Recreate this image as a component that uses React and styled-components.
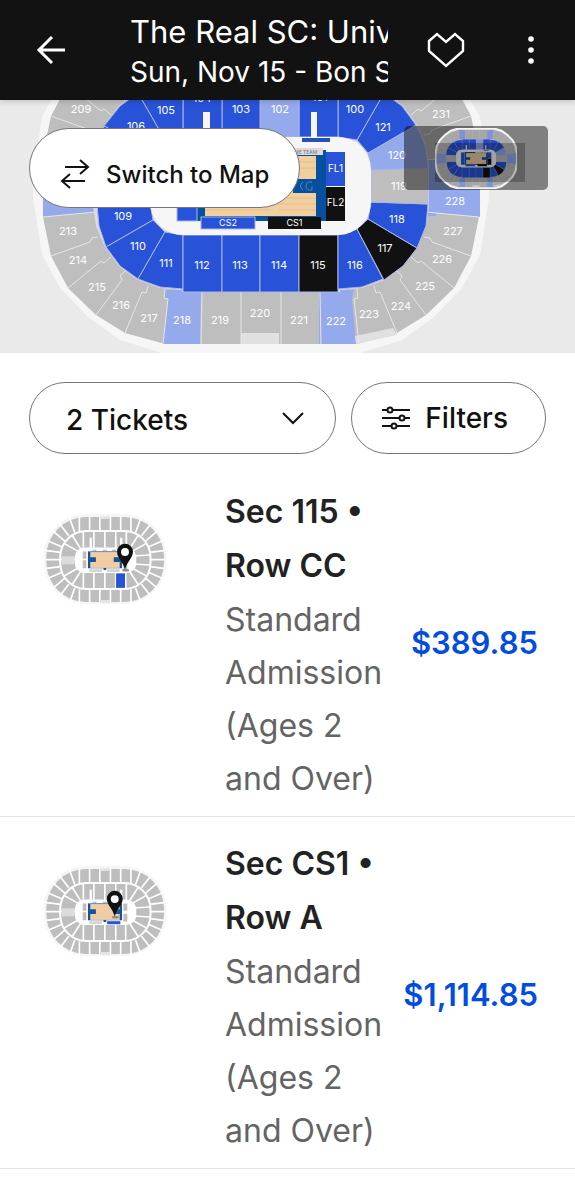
import styled, { createGlobalStyle } from 'styled-components'

const BLUE = '#2853d8'
const LIGHT = '#95a9ed'
const GRAY = '#bebebe'
const BLACK = '#111111'

const OUTLINE = [[33, 186], [33, 198], [42, 255], [60, 288], [88, 317], [120, 340], [162, 353]]
const STANDS = [[43, 186], [43, 217], [51, 256], [68, 288], [96, 315], [125, 333], [165, 344]]
const BOWL = [[94, 186], [94, 206], [97, 226], [106, 247], [120, 266], [138, 279], [160, 287], [183, 289], [183, 291]]

const SEAMS = [
	[[43, 217], [96, 212]],
	[[51, 256], [90, 242], [92, 238], [98, 237]],
	[[68, 288], [101, 261], [104, 263], [111, 257]],
	[[96, 315], [122, 280], [120, 276], [126, 270]],
	[[125, 333], [142, 292], [146, 293], [148, 286]],
	[[163, 344], [168, 299], [164, 298], [165, 289]],
	[[201, 344], [202, 292]],
	[[241, 344], [241, 292]],
]

const SECTIONS = [
	{ fill: BLUE, points: '150,202 153,220 106,247 99,226 97,204' },
	{ fill: BLUE, points: '153,220 165,232 138,279 120,266 106,247' },
	{ fill: BLUE, points: '165,232 183,235 183,289 160,287 138,279' },
	{ fill: BLUE, points: '183,235 222,235 222,292 183,292' },
	{ fill: BLUE, points: '222,235 260,235 260,292 222,292' },
	{ fill: BLUE, points: '260,235 299,235 299,292 260,292' },
	{ fill: BLACK, points: '299,235 338,235 338,292 299,292' },
	{ fill: BLUE, points: '338,235 357,229 383,279 362,287 338,289' },
	{ fill: BLACK, points: '357,229 368,219 417,248 403,266 384,280' },
	{ fill: BLUE, points: '368,219 371,202 428,204 426,226 417,248' },
	{ fill: GRAY, points: '371,170 371,202 428,204 428,168' },
	{ fill: LIGHT, points: '368,153 371,170 428,168 425,146 416,125' },
	{ fill: BLUE, points: '357,140 368,153 416,125 402,106 384,93' },
	{ fill: BLUE, points: '338,137 357,140 384,93 362,85 338,83' },
	{ fill: BLUE, points: '299,80 338,80 338,137 299,137' },
	{ fill: LIGHT, points: '260,80 299,80 299,137 260,137' },
	{ fill: BLUE, points: '222,80 260,80 260,137 222,137' },
	{ fill: BLUE, points: '183,80 222,80 222,137 183,137' },
	{ fill: BLUE, points: '165,140 183,137 183,83 160,85 138,93' },
	{ fill: BLUE, points: '153,152 165,140 138,93 120,106 104,126' },
	{ fill: BLUE, points: '150,170 153,152 104,126 97,146 94,168' },
	{ fill: GRAY, points: '150,170 150,202 94,204 94,168' },
]

const LABELS = [
	[209, 81, 109], [106, 136, 126], [105, 166, 110], [104, 202, 98], [103, 241, 109],
	[102, 280, 109], [101, 320, 97], [100, 355, 109], [121, 383, 127], [120, 397, 155],
	[119, 399, 186], [118, 397, 219], [117, 385, 248], [116, 355, 265], [115, 318, 265],
	[114, 279, 265], [113, 240, 265], [112, 202, 265], [111, 166, 263], [110, 138, 246],
	[109, 123, 216], [213, 68, 231], [214, 78, 260], [215, 97, 287], [216, 121, 305],
	[217, 149, 318], [218, 182, 320], [219, 220, 320], [220, 260, 313], [221, 299, 320],
	[222, 336, 321], [223, 369, 314], [224, 401, 306], [225, 425, 286], [226, 442, 259],
	[227, 453, 231], [228, 455, 201], [231, 441, 114],
]

// the arena is symmetric on both axes around (261, 186)
const flipX = ([x, y]) => [522 - x, y]
const flipY = ([x, y]) => [x, 372 - y]

const mirror = (quarter) => {
	const bottom = [...quarter, ...quarter.map(flipX).reverse()]
	return [...bottom, ...bottom.map(flipY).reverse()].join(' ')
}

const mirrorSeam = (seam) => [seam, seam.map(flipX), seam.map(flipY), seam.map(flipX).map(flipY)]

function Arena() {
	return (
		<g>
			<polygon points={mirror(OUTLINE)} fill="#f6f6f6" />
			<polygon points={mirror(STANDS)} fill={GRAY} />
			<g fill={LIGHT}>
				<polygon points="165,290 164,298 168,299 163,344 200,344 201,290" />
				<polygon points="319,290 319,344 356,344 352,299 354,290" />
				<polygon points="165,80 168,73 163,28 200,28 201,80" />
				<polygon points="319,80 319,28 356,28 352,73 354,80" />
				<polygon points="428,160 480,155 480,217 436,213 436,216 428,216" />
				<polygon points="43,155 94,160 94,212 43,217" />
			</g>
			<g fill="#e0e0e0">
				<polygon points="241,333 279,333 279,344 241,344" />
				<polygon points="355,336 393,328 397,335 356,344" />
			</g>
			<g fill="none" stroke="#e6e6e8" strokeWidth="1">
				{SEAMS.flatMap(mirrorSeam).map((seam, i) => (
					<polyline key={i} points={seam.join(' ')} />
				))}
			</g>
			<polygon points={mirror(BOWL)} fill="#dcdcdf" stroke="#dcdcdf" strokeWidth="2" />
			<g stroke="#a9b7e8" strokeWidth="1">
				{SECTIONS.map(({ fill, points }) => (
					<polygon key={points} fill={fill} points={points} />
				))}
			</g>
			<rect x="150" y="137" width="221" height="98" rx="33" fill="#f6f6f6" />
			<rect x="203" y="112" width="7" height="26" fill="#f6f6f6" />
			<rect x="311" y="112" width="6" height="26" fill="#f6f6f6" />
			<rect x="302" y="138" width="28" height="4" fill="#2450b5" />
			<rect x="197" y="150" width="129" height="71" fill="#07509e" />
			<rect x="205" y="156" width="111" height="60" fill="#f1cf9f" />
			<g stroke="#e5bf8e" strokeWidth="1">
				<path d="M205 162h40m12 0h59M210 168h62m8 0h36M205 174h28m10 0h54M205 198h50m10 0h51M212 204h40m6 0h58M205 210h66m8 0h37" />
			</g>
			<rect x="205" y="179" width="23" height="14" fill="#07509e" />
			<rect x="293" y="179" width="23" height="14" fill="#07509e" />
			<path d="M303 182q-5 4 0 8M312 182q-6-1-6 4t6 4v-4" fill="none" stroke="#4b86c6" strokeWidth="1" />
			<rect x="255" y="148" width="68" height="7" fill="#dadada" />
			<text x="302" y="154" fontSize="5" fill="#777" textAnchor="middle">HOME TEAM</text>
			<rect x="177" y="152" width="20" height="69" fill={BLUE} stroke="#a9b7e8" />
			<rect x="326" y="152" width="19" height="34" fill={BLUE} />
			<rect x="326" y="187" width="19" height="34" fill={BLACK} />
			<rect x="201" y="217" width="54" height="12" fill={BLUE} stroke="#a9b7e8" />
			<rect x="268" y="217" width="53" height="12" fill={BLACK} />
		</g>
	)
}

function ArenaLabels() {
	return (
		<g fill="#fff" fontSize="11" textAnchor="middle">
			{LABELS.map(([name, x, y]) => (
				<text key={name} x={x} y={y + 4}>{name}</text>
			))}
			<g fontSize="10">
				<text x="335.5" y="172">FL1</text>
				<text x="335.5" y="206">FL2</text>
				<text x="228" y="226" fontSize="9">CS2</text>
				<text x="294.5" y="226" fontSize="9">CS1</text>
			</g>
		</g>
	)
}

function SeatThumb({ pin, children }) {
	return (
		<Thumb viewBox="38 38 375 276" role="img" aria-label="Seat location">
			<rect x="40" y="40" width="371" height="272" rx="128" fill="#f5f5f5" />
			<rect x="48" y="49" width="356" height="257" rx="120" fill={GRAY} />
			<rect x="90" y="91" width="273" height="176" rx="80" fill="none" stroke="#fff" strokeWidth="6" />
			<g fill="none" stroke="#fff" strokeWidth="5">
				<path d="M148 44v48M179 44v48M210 44v48M242 44v48M273 44v48M304 44v48" />
				<path d="M148 268v44M179 268v44M210 268v44M242 268v44M273 268v44M304 268v44" />
				<path d="M160 92v50M192 92v50M225 92v50M258 92v50M290 92v50M160 210v56M192 210v56M225 210v56M258 210v56M288 210v56" />
				<path d="M116 46l18 50M84 64l32 42M64 88l40 34M50 120l46 20M44 150l46 6M44 178h96M44 205l46-6M50 236l46-20M64 268l40-34M84 294l32-42M116 314l18-50" />
				<path d="M336 46l-18 50M368 64l-32 42M388 88l-40 34M402 120l-46 20M408 150l-46 6M362 178h46M408 205l-46-6M402 236l-46-20M388 268l-40-34M368 294l-32-42M336 314l-18-50" />
				<path d="M100 128l50 28M126 104l28 44M100 228l50-28M126 254l28-44M352 128l-50 28M326 104l-28 44M352 228l-50-28M326 254l-28-44M362 164l-50 3M362 194l-50-3" />
			</g>
			<rect x="95" y="168" width="38" height="24" fill="#dcdcdc" />
			<path d="M210 47h30v8h-30zM210 300h30v8h-30z" fill="#e4e4e4" />
			<rect x="134" y="141" width="186" height="77" rx="30" fill="#fff" />
			<path d="M179 112h7v30h-7zM271 112h7v30h-7z" fill="#fff" />
			<path d="M158 153h11v22h-11zM158 180h11v24h-11zM281 153h12v22h-12zM281 184h12v24h-12z" fill={GRAY} />
			<rect x="174" y="153" width="103" height="51" fill="#17539c" />
			<rect x="181" y="155" width="89" height="48" fill="#f0cda2" />
			<path d="M176 171h22v14h-22zM252 171h22v14h-22zM221 203h8v6h-8z" fill="#17539c" />
			<path d="M178 207h38v8h-38zM232 207h38v8h-38z" fill="#d4d4d4" />
			<path d="M188 148h12v4h-12zM219 148h12v4h-12zM247 148h12v4h-12z" fill="#b5bcc9" />
			{children}
			<g transform={`translate(${pin})`}>
				<ellipse cx="2" cy="2" rx="11" ry="4" fill="#8c8c8c" />
				<path d="M0 0C-6-24-24-36-24-54a24 24 0 0 1 48 0C24-36 6-24 0 0Z" fill="#111" />
				<circle cx="0" cy="-53" r="12" fill="#fff" />
			</g>
		</Thumb>
	)
}

const TICKETS = [
	{
		seat: 'Sec 115 • Row CC',
		price: '$389.85',
		pin: '286 208',
		mark: <rect x="259" y="220" width="27" height="43" fill={BLUE} />,
	},
	{
		seat: 'Sec CS1 • Row A',
		price: '$1,114.85',
		pin: '255 193',
		mark: <rect x="232" y="207" width="40" height="9" fill={BLUE} />,
	},
]

function App() {
	return (
		<Page>
			<GlobalStyle />
			<Header>
				<BackButton aria-label="Back">
					<svg width="30" height="30" fill="none" stroke="#fff" strokeWidth="3">
						<path d="M29 15H3M16 2 3 15l13 13" />
					</svg>
				</BackButton>
				<Titles>
					<Title>The Real SC: Universal</Title>
					<Subtitle>Sun, Nov 15 - Bon Secours</Subtitle>
				</Titles>
				<HeaderButton aria-label="Favorite">
					<svg width="38" height="36" fill="none" stroke="#fff" strokeWidth="2.4">
						<path d="m2 9 8-7 9 8 9-8 8 7v10L19 34 2 19Z" />
					</svg>
				</HeaderButton>
				<HeaderButton aria-label="More">
					<svg width="8" height="30" fill="#fff">
						<circle cx="4" cy="4" r="2.8" />
						<circle cx="4" cy="15" r="2.8" />
						<circle cx="4" cy="26" r="2.8" />
					</svg>
				</HeaderButton>
			</Header>
			<MapArea>
				<MapSvg viewBox="0 100 575 253" preserveAspectRatio="xMidYMid slice">
					<Arena />
					<ArenaLabels />
				</MapSvg>
				<SwitchButton>
					<svg width="30" height="30" fill="none" stroke="#111" strokeWidth="2">
						<path d="M5 8h23M20 1l8 7-8 7M25 22H2M10 15l-8 7 8 7" />
					</svg>
					Switch to Map
				</SwitchButton>
				<MiniMap>
					<svg width="82" height="61" viewBox="33 19 454 334">
						<Arena />
						<polygon points={mirror(OUTLINE)} fill="#000" fillOpacity="0.12" stroke="#f4f4f4" strokeWidth="10" />
					</svg>
					<Viewport />
				</MiniMap>
			</MapArea>
			<Controls>
				<SelectPill>
					<Select aria-label="Ticket quantity" defaultValue="2">
						<option value="1">1 Ticket</option>
						<option value="2">2 Tickets</option>
						<option value="3">3 Tickets</option>
					</Select>
					<svg width="22" height="14" fill="none" stroke="#111" strokeWidth="2">
						<path d="m1 2 10 10L21 2" />
					</svg>
				</SelectPill>
				<FilterButton>
					<svg width="28" height="26" fill="#fff" stroke="#111" strokeWidth="2">
						<path d="M0 5h28M0 13h28M0 21h28" />
						<circle cx="8" cy="5" r="2.5" />
						<circle cx="20" cy="13" r="2.5" />
						<circle cx="12" cy="21" r="2.5" />
					</svg>
					Filters
				</FilterButton>
			</Controls>
			<TicketList>
				{TICKETS.map(({ seat, price, pin, mark }) => (
					<Ticket key={seat}>
						<SeatThumb pin={pin}>{mark}</SeatThumb>
						<div>
							<Seat>{seat}</Seat>
							<Kind>Standard Admission (Ages 2 and Over)</Kind>
						</div>
						<Price>{price}</Price>
					</Ticket>
				))}
			</TicketList>
		</Page>
	)
}

const GlobalStyle = createGlobalStyle`
	* {
		box-sizing: border-box;
	}

	body {
		margin: 0;
		background-color: #fff;
	}

	body, button, select {
		font-family: Inter, "Liberation Sans", sans-serif;
	}
`

const Page = styled.main`
	color: #111;
`

const Header = styled.header`
	position: relative;
	z-index: 1;
	display: flex;
	align-items: center;
	height: 100px;
	padding-right: 2px;
	background-color: #121212;
	color: #fff;
	box-shadow: 0 1px 6px rgba(0, 0, 0, 0.2);
`

const HeaderButton = styled.button`
	display: flex;
	justify-content: center;
	flex: none;
	width: 85px;
	padding: 0;
	border: 0;
	background: none;
`

const BackButton = styled(HeaderButton)`
	width: 130px;
	justify-content: flex-start;
	padding-left: 36px;
`

const Titles = styled.div`
	flex: 1;
	min-width: 0;
	margin-right: 15px;
	padding-top: 4px;
	white-space: nowrap;
`

const Title = styled.h1`
	margin: 0;
	overflow: hidden;
	font-size: 31px;
	font-weight: 400;
	line-height: 41px;
`

const Subtitle = styled.p`
	margin: 0;
	overflow: hidden;
	font-size: 28px;
	line-height: 41px;
`

const MapArea = styled.section`
	position: relative;
	height: 253px;
	background-color: #eaeaea;
`

const MapSvg = styled.svg`
	display: block;
	width: 100%;
	height: 100%;
`

const Pill = styled.button`
	display: flex;
	align-items: center;
	height: 72px;
	border: 1px solid #767676;
	border-radius: 40px;
	background-color: #fff;
	color: #111;
	font-weight: 500;
	font-size: 28px;
	white-space: nowrap;
`

const SwitchButton = styled(Pill)`
	position: absolute;
	top: 28px;
	left: 29px;
	height: 80px;
	gap: 16px;
	padding: 12px 30px 0;
	font-size: 24px;
`

const MiniMap = styled.div`
	position: absolute;
	top: 26px;
	right: 27px;
	display: flex;
	justify-content: center;
	width: 144px;
	height: 64px;
	padding: 2px;
	border-radius: 5px;
	background-color: rgba(0, 0, 0, 0.45);
`

const Viewport = styled.div`
	position: absolute;
	top: 17px;
	left: 31px;
	width: 90px;
	height: 39px;
	background-color: rgba(0, 0, 0, 0.25);
`

const Controls = styled.div`
	display: flex;
	gap: 15px;
	padding: 29px 29px 11px;
`

const SelectPill = styled(Pill).attrs({ as: 'label' })`
	position: relative;
	flex: 1;

	svg {
		position: absolute;
		right: 31px;
		pointer-events: none;
	}
`

const Select = styled.select`
	appearance: none;
	width: 100%;
	height: 100%;
	padding: 3px 60px 0 36px;
	border: 0;
	border-radius: 40px;
	background: none;
	color: inherit;
	font-size: inherit;
	font-weight: inherit;
`

const FilterButton = styled(Pill)`
	gap: 15px;
	padding: 0 37px 0 30px;
`

const TicketList = styled.ul`
	margin: 0;
	padding: 0;
	list-style: none;
`

const Ticket = styled.li`
	display: grid;
	grid-template-columns: 182px 168px 1fr;
	padding: 20px 37px 11px 43px;
	border-bottom: 1px solid #e4e4e4;
`

const Thumb = styled.svg`
	display: block;
	width: 124px;
	height: 92px;
	margin-top: 28px;
`

const Seat = styled.h2`
	margin: 0;
	color: #222;
	font-size: 32px;
	font-weight: 600;
	line-height: 54px;
`

const Kind = styled.p`
	margin: 0;
	color: #646464;
	font-size: 32px;
	line-height: 53px;
`

const Price = styled.strong`
	align-self: center;
	justify-self: end;
	padding-bottom: 6px;
	color: #024ddf;
	font-size: 31px;
	font-weight: 600;
`

export default App
